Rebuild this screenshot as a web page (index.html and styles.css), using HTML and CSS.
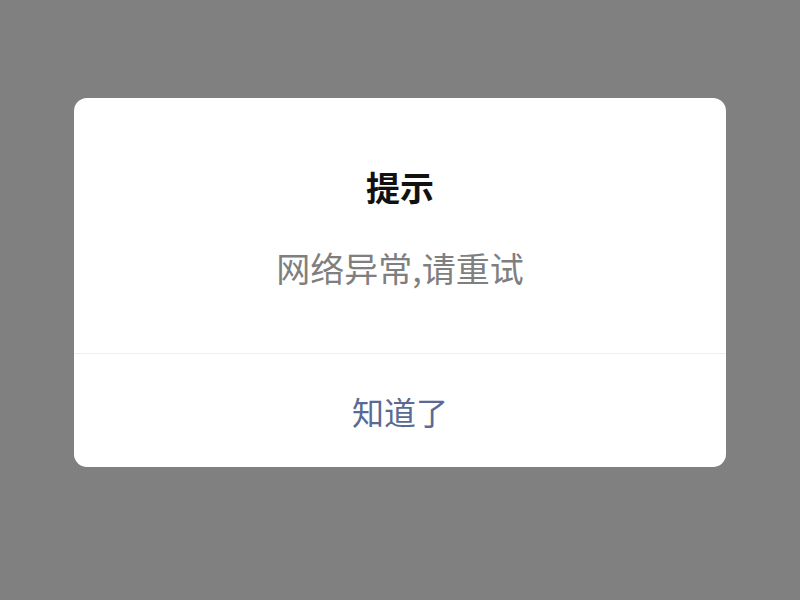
FILE: index.html
```html
<!DOCTYPE html>
<html lang="zh-CN">
<head>
<meta charset="utf-8">
<link rel="stylesheet" href="styles.css">
</head>
<body>
<div class="overlay">
  <div class="dialog">
    <div class="dialog-body">
      <div class="dialog-title">提示</div>
      <div class="dialog-msg">网络异常,请重试</div>
    </div>
    <div class="dialog-footer">
      <div class="dialog-btn">知道了</div>
    </div>
  </div>
</div>
</body>
</html>
```
FILE: styles.css
```css
html, body {
  margin: 0;
  padding: 0;
  width: 800px;
  height: 600px;
  background: #808080;
  font-family: "Noto Sans CJK SC", "Noto Sans", sans-serif;
  overflow: hidden;
}
.overlay {
  display: flex;
  justify-content: center;
  padding-top: 98px;
}
.dialog {
  width: 652px;
  background: #ffffff;
  border-radius: 13px;
  overflow: hidden;
}
.dialog-body {
  height: 256px;
  box-sizing: border-box;
  padding-top: 69px;
  border-bottom: 1px solid #eeeeee;
  text-align: center;
}
.dialog-title {
  font-size: 34px;
  line-height: 40px;
  font-weight: 700;
  color: #111111;
}
.dialog-msg {
  margin-top: 41px;
  font-size: 34px;
  line-height: 40px;
  color: #7f7f7f;
}
.dialog-footer {
  height: 113px;
  display: flex;
  align-items: center;
  justify-content: center;
}
.dialog-btn {
  font-size: 32px;
  line-height: 40px;
  color: #576b95;
}
```
